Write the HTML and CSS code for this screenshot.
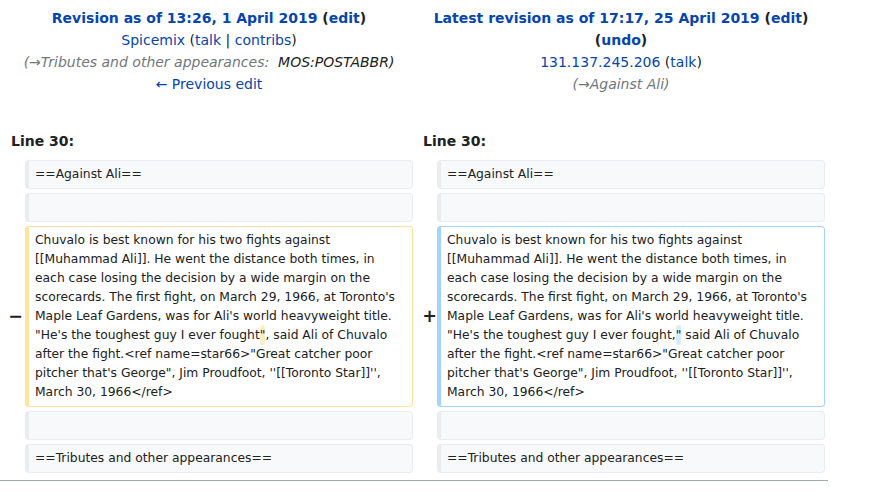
FILE: index.html
```html
<!DOCTYPE html>
<html lang="en">
<head>
<meta charset="utf-8">
<title>Diff</title>
<link rel="stylesheet" href="styles.css">
</head>
<body>
<div class="diff">
  <div class="title">
    <div class="t-line"><strong><a href="#">Revision as of 13:26, 1 April 2019</a> (<a href="#">edit</a>)</strong></div>
    <div class="t-line"><a href="#">Spicemix</a> (<a href="#">talk</a> | <a href="#">contribs</a>)</div>
    <div class="t-line"><span class="comment"><span class="autocomment">(→Tributes and other appearances:&nbsp;</span> MOS:POSTABBR)</span></div>
    <div class="t-line"><a href="#">← Previous edit</a></div>
  </div>
  <div class="title">
    <div class="t-line"><strong><a href="#">Latest revision as of 17:17, 25 April 2019</a> (<a href="#">edit</a>)</strong></div>
    <div class="t-line"><strong>(<a href="#">undo</a>)</strong></div>
    <div class="t-line"><a href="#">131.137.245.206</a> (<a href="#">talk</a>)</div>
    <div class="t-line"><span class="comment autocomment">(→Against Ali)</span></div>
  </div>

  <div class="lineno">Line 30:</div>
  <div class="lineno">Line 30:</div>

  <div class="marker"></div>
  <div class="cell context">==Against Ali==</div>
  <div class="marker"></div>
  <div class="cell context">==Against Ali==</div>

  <div class="marker"></div>
  <div class="cell context"><br></div>
  <div class="marker"></div>
  <div class="cell context"><br></div>

  <div class="marker marker-del"><span>−</span></div>
  <div class="cell deleted">Chuvalo is best known for his two fights against [[Muhammad Ali]]. He went the distance both times, in each case losing the decision by a wide margin on the scorecards. The first fight, on March 29, 1966, at Toronto's Maple Leaf Gardens, was for Ali's world heavyweight title. "He's the toughest guy I ever fought<span class="change">"</span>, said Ali of Chuvalo after the fight.&lt;ref name=star66&gt;"Great catcher poor pitcher that's George", Jim Proudfoot, ''[[Toronto Star]]'', March 30, 1966&lt;/ref&gt;</div>
  <div class="marker marker-add"><span>+</span></div>
  <div class="cell added">Chuvalo is best known for his two fights against [[Muhammad Ali]]. He went the distance both times, in each case losing the decision by a wide margin on the scorecards. The first fight, on March 29, 1966, at Toronto's Maple Leaf Gardens, was for Ali's world heavyweight title. "He's the toughest guy I ever fought,<span class="change">"</span> said Ali of Chuvalo after the fight.&lt;ref name=star66&gt;"Great catcher poor pitcher that's George", Jim Proudfoot, ''[[Toronto Star]]'', March 30, 1966&lt;/ref&gt;</div>

  <div class="marker"></div>
  <div class="cell context"><br></div>
  <div class="marker"></div>
  <div class="cell context"><br></div>

  <div class="marker"></div>
  <div class="cell context">==Tributes and other appearances==</div>
  <div class="marker"></div>
  <div class="cell context">==Tributes and other appearances==</div>
</div>
<div class="diff-hr"></div>
</body>
</html>
```

FILE: styles.css
```css
html, body {
  margin: 0;
  padding: 0;
  background: #ffffff;
}

body {
  font-family: "DejaVu Sans", sans-serif;
  font-size: 14px;
  color: #202122;
}

a {
  color: #0645ad;
  text-decoration: none;
}

.diff {
  width: 828px;
  box-sizing: border-box;
  padding: 4px 3px 4px 5px;
  display: grid;
  grid-template-columns: 16px 1fr 16px 1fr;
  gap: 4px;
}

.title {
  grid-column: span 2;
  text-align: center;
  line-height: 22px;
  padding-top: 3px;
}

.comment {
  font-style: italic;
}

.autocomment {
  color: #72777d;
}

.lineno {
  grid-column: span 2;
  font-weight: bold;
  line-height: 22px;
  padding: 31px 0 4px 6px;
}

.marker {
  display: flex;
  align-items: center;
  justify-content: flex-end;
  font-weight: bold;
  font-size: 17.5px;
  line-height: 1.2;
}

.marker-del span {
  margin-right: -2px;
}

.marker-add span {
  margin-right: -4px;
}

.cell {
  font-size: 12.32px;
  line-height: 19px;
  padding: 4px 6px;
  border: 1px solid #eaecf0;
  border-left-width: 4px;
  border-radius: 4px;
  white-space: pre-wrap;
  word-wrap: break-word;
  min-width: 0;
}

.context {
  background: #f8f9fa;
  border-color: #eaecf0;
}

.deleted {
  background: #ffffff;
  border-color: #ffe49c;
}

.added {
  background: #ffffff;
  border-color: #a3d3ff;
}

.change {
  border-radius: 4px;
  padding: 3px 0;
}

.deleted .change {
  background: #feeec8;
}

.added .change {
  background: #d8ecff;
}

.diff-hr {
  width: 828px;
  margin-top: 3px;
  border-top: 1px solid #a2a9b1;
}
```
